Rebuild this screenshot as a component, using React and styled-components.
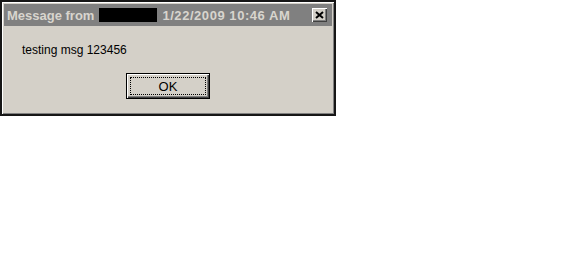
import React from 'react';
import styled, { createGlobalStyle } from 'styled-components';

const GlobalStyle = createGlobalStyle`
  html, body {
    margin: 0;
    padding: 0;
    background: #ffffff;
  }
`;

const Window = styled.div`
  width: 336px;
  height: 116px;
  box-sizing: border-box;
  border: 2px solid #161616;
  background: #d4d0c8;
  box-shadow: inset 1px 1px 0 #ffffff, inset -1px -1px 0 #808080;
  padding: 2px;
  display: flex;
  flex-direction: column;
  font-family: "Liberation Sans", Arial, sans-serif;
`;

const TitleBar = styled.div`
  height: 22px;
  background: #808080;
  display: flex;
  align-items: center;
  padding: 0 5px 0 3px;
  color: #d8d5ce;
  font-weight: bold;
  font-size: 13px;
  white-space: nowrap;
`;

const Redacted = styled.span`
  display: inline-block;
  width: 58px;
  height: 14px;
  background: #000;
  margin: 0 5px 0 5px;
`;

const Stamp = styled.span`
  letter-spacing: 0.55px;
`;

const CloseButton = styled.button`
  margin-left: auto;
  width: 15px;
  height: 14px;
  padding: 0;
  border: none;
  background: #d4d0c8;
  box-shadow: inset 1px 1px 0 #ffffff, inset -1px -1px 0 #404040, inset -2px -2px 0 #808080;
  display: flex;
  align-items: center;
  justify-content: center;
`;

const Body = styled.div`
  flex: 1;
  display: flex;
  flex-direction: column;
`;

const Message = styled.div`
  font-size: 12px;
  color: #000;
  padding: 16px 0 0 18px;
  line-height: 16px;
`;

const ButtonRow = styled.div`
  display: flex;
  justify-content: center;
  margin-top: 15px;
`;

const OkButton = styled.button`
  width: 84px;
  height: 26px;
  box-sizing: border-box;
  border: 1px solid #000;
  background: #d4d0c8;
  box-shadow: inset 1px 1px 0 #ffffff, inset -1px -1px 0 #404040, inset -2px -2px 0 #808080;
  padding: 3px;
  font-family: "Liberation Sans", Arial, sans-serif;
  font-size: 13px;
  color: #000;
`;

const Focus = styled.span`
  display: flex;
  align-items: center;
  justify-content: center;
  height: 100%;
  box-sizing: border-box;
  border: 1px dotted #000;
`;

export default function App() {
  return (
    <>
      <GlobalStyle />
      <Window>
        <TitleBar>
          Message from
          <Redacted />
          <Stamp>1/22/2009 10:46 AM</Stamp>
          <CloseButton>
            <svg width="9" height="8" viewBox="0 0 9 8">
              <path d="M1 1L8 7M8 1L1 7" stroke="#000" strokeWidth="2" fill="none" />
            </svg>
          </CloseButton>
        </TitleBar>
        <Body>
          <Message>testing msg 123456</Message>
          <ButtonRow>
            <OkButton>
              <Focus>OK</Focus>
            </OkButton>
          </ButtonRow>
        </Body>
      </Window>
    </>
  );
}
